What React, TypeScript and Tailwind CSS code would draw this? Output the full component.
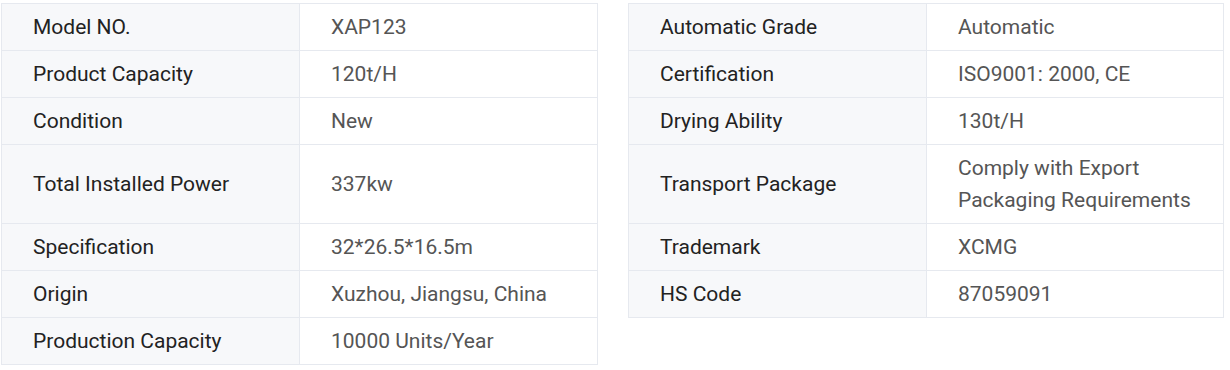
const left: [string, string][] = [
  ["Model NO.", "XAP123"],
  ["Product Capacity", "120t/H"],
  ["Condition", "New"],
  ["Total Installed Power", "337kw"],
  ["Specification", "32*26.5*16.5m"],
  ["Origin", "Xuzhou, Jiangsu, China"],
  ["Production Capacity", "10000 Units/Year"],
]

const right: [string, string][] = [
  ["Automatic Grade", "Automatic"],
  ["Certification", "ISO9001: 2000, CE"],
  ["Drying Ability", "130t/H"],
  ["Transport Package", "Comply with Export Packaging Requirements"],
  ["Trademark", "XCMG"],
  ["HS Code", "87059091"],
]

const labelCls =
  "border border-[#e6e9ef] bg-[#f7f8fa] pl-[31px] pr-4 py-[7px] leading-[32px] text-[#222222] align-middle"
const valueCls =
  "border border-[#e6e9ef] bg-white pl-[31px] pr-6 py-[7px] leading-[32px] text-[#555555] align-middle"

export default function App() {
  return (
    <div className="w-[1230px] h-[370px] bg-white pt-[3px] pl-[1px] font-['Roboto',sans-serif] text-[21px]">
      <table className="border-collapse table-fixed w-[1222px]">
        <colgroup>
          <col className="w-[298px]" />
          <col className="w-[298px]" />
          <col className="w-[31px]" />
          <col className="w-[298px]" />
          <col className="w-[297px]" />
        </colgroup>
        <tbody>
          {left.map(([k, v], i) => (
            <tr key={k}>
              <td className={labelCls}>{k}</td>
              <td className={valueCls}>{v}</td>
              <td />
              {right[i] ? (
                <>
                  <td className={labelCls}>{right[i][0]}</td>
                  <td className={valueCls}>{right[i][1]}</td>
                </>
              ) : (
                <>
                  <td />
                  <td />
                </>
              )}
            </tr>
          ))}
        </tbody>
      </table>
    </div>
  )
}
